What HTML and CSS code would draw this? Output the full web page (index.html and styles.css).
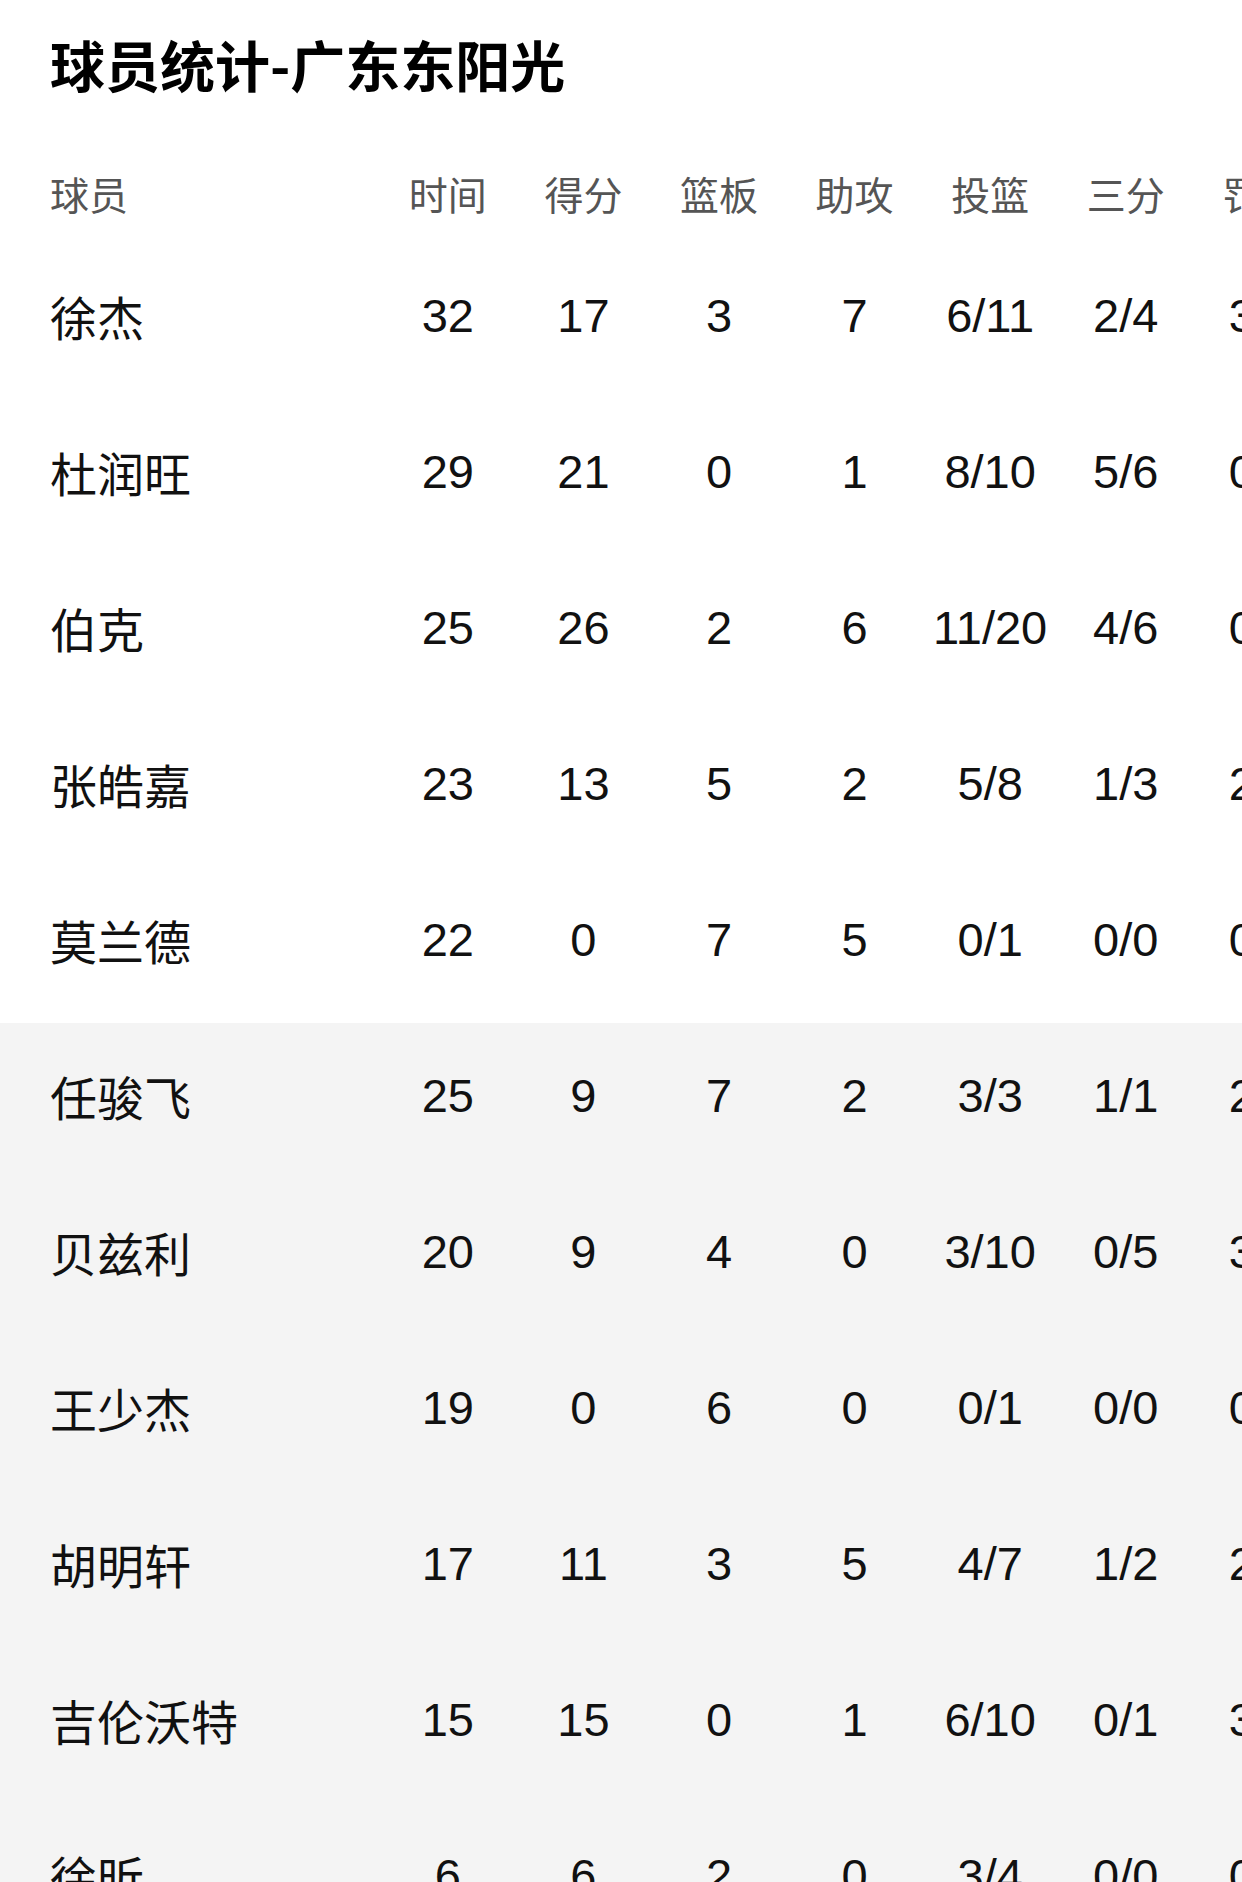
FILE: index.html
```html
<!DOCTYPE html>
<html lang="zh-CN">
<head>
<meta charset="utf-8">
<title>球员统计-广东东阳光</title>
<link rel="stylesheet" href="styles.css">
</head>
<body>
<div class="page">
  <h1 class="title">球员统计-广东东阳光</h1>
  <div class="table">
    <div class="row head">
      <div class="name">球员</div><div class="cell">时间</div><div class="cell">得分</div><div class="cell">篮板</div><div class="cell">助攻</div><div class="cell">投篮</div><div class="cell">三分</div><div class="cell">罚球</div>
    </div>
    <div class="row"><div class="name">徐杰</div><div class="cell">32</div><div class="cell">17</div><div class="cell">3</div><div class="cell">7</div><div class="cell">6/11</div><div class="cell">2/4</div><div class="cell">3/4</div></div>
    <div class="row"><div class="name">杜润旺</div><div class="cell">29</div><div class="cell">21</div><div class="cell">0</div><div class="cell">1</div><div class="cell">8/10</div><div class="cell">5/6</div><div class="cell">0/0</div></div>
    <div class="row"><div class="name">伯克</div><div class="cell">25</div><div class="cell">26</div><div class="cell">2</div><div class="cell">6</div><div class="cell">11/20</div><div class="cell">4/6</div><div class="cell">0/0</div></div>
    <div class="row"><div class="name">张皓嘉</div><div class="cell">23</div><div class="cell">13</div><div class="cell">5</div><div class="cell">2</div><div class="cell">5/8</div><div class="cell">1/3</div><div class="cell">2/2</div></div>
    <div class="row"><div class="name">莫兰德</div><div class="cell">22</div><div class="cell">0</div><div class="cell">7</div><div class="cell">5</div><div class="cell">0/1</div><div class="cell">0/0</div><div class="cell">0/0</div></div>
    <div class="row bench"><div class="name">任骏飞</div><div class="cell">25</div><div class="cell">9</div><div class="cell">7</div><div class="cell">2</div><div class="cell">3/3</div><div class="cell">1/1</div><div class="cell">2/2</div></div>
    <div class="row bench"><div class="name">贝兹利</div><div class="cell">20</div><div class="cell">9</div><div class="cell">4</div><div class="cell">0</div><div class="cell">3/10</div><div class="cell">0/5</div><div class="cell">3/4</div></div>
    <div class="row bench"><div class="name">王少杰</div><div class="cell">19</div><div class="cell">0</div><div class="cell">6</div><div class="cell">0</div><div class="cell">0/1</div><div class="cell">0/0</div><div class="cell">0/0</div></div>
    <div class="row bench"><div class="name">胡明轩</div><div class="cell">17</div><div class="cell">11</div><div class="cell">3</div><div class="cell">5</div><div class="cell">4/7</div><div class="cell">1/2</div><div class="cell">2/2</div></div>
    <div class="row bench"><div class="name">吉伦沃特</div><div class="cell">15</div><div class="cell">15</div><div class="cell">0</div><div class="cell">1</div><div class="cell">6/10</div><div class="cell">0/1</div><div class="cell">3/4</div></div>
    <div class="row bench"><div class="name">徐昕</div><div class="cell">6</div><div class="cell">6</div><div class="cell">2</div><div class="cell">0</div><div class="cell">3/4</div><div class="cell">0/0</div><div class="cell">0/0</div></div>
  </div>
</div>
</body>
</html>
```

FILE: styles.css
```css
html, body {
  margin: 0;
  padding: 0;
  background: #ffffff;
}

body {
  width: 1242px;
  overflow: hidden;
  font-family: "Liberation Sans", "Noto Sans CJK SC", sans-serif;
  color: #111111;
}

.page {
  width: 1242px;
  overflow: hidden;
}

.title {
  margin: 0;
  padding-left: 50px;
  height: 126px;
  line-height: 126px;
  font-family: "Noto Sans CJK SC", sans-serif;
  font-size: 55px;
  font-weight: 700;
  color: #000000;
  white-space: nowrap;
}

.table {
  margin-top: 29px;
  width: 1465px;
}

.row {
  display: grid;
  grid-template-columns: 330px repeat(8, 135.6px);
  padding-left: 50px;
  padding-bottom: 12px;
  height: 156px;
  box-sizing: border-box;
  align-items: center;
  font-size: 47px;
  white-space: nowrap;
}

.row.head {
  height: 88px;
  font-size: 39px;
  color: #555555;
}

.row.bench {
  background: #f4f4f4;
}

.name {
  font-family: "Noto Sans CJK SC", sans-serif;
}

.cell {
  text-align: center;
}

.head .cell {
  font-family: "Noto Sans CJK SC", sans-serif;
}
```
